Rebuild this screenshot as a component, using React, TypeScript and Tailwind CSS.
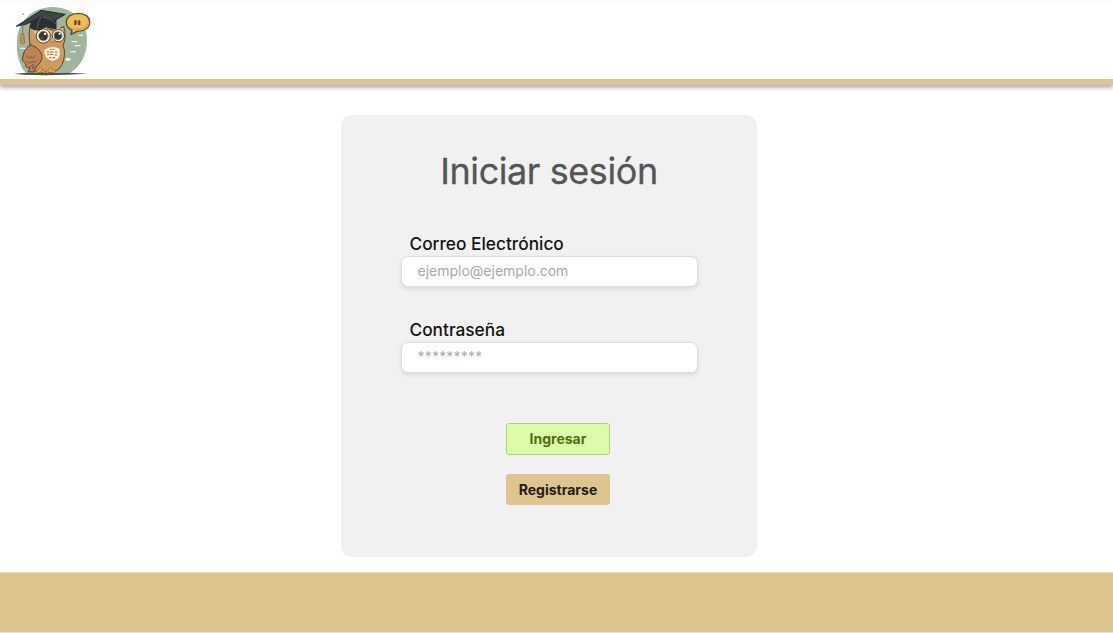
function OwlLogo() {
  return (
    <svg viewBox="30 15 255 216" className="block h-[72px] w-[85px]" role="img" aria-label="Búho" strokeLinejoin="round" strokeLinecap="round">
      <path d="M78 219C57 198 48 160 51 122C54 63 99 21 157 21C219 21 261 66 261 119C261 162 243 198 211 218Z" fill="#a0b59e" />
      <circle cx="69" cy="42" r="3" fill="#a4b6a4" />
      <path d="M42 221Q90 216 145 219L205 218L264 221Q160 228 70 224Z" fill="#40564c" />
      <g stroke="#edf3e9" strokeWidth="4">
        <path d="M216 125h14M226 137h14M213 155h13M62 145h14M237 106h10" />
      </g>
      <rect x="197" y="174" width="14" height="8" rx="1" fill="#f2f5ed" />
      <path d="M90 77Q84 105 90 132L83 192Q89 214 119 216H158Q184 210 191 180Q197 154 189 137Q201 111 191 79L166 92L137 84Z" fill="#cf9a60" stroke="#5a4432" strokeWidth="3" />
      <path d="M92 82Q108 98 126 89L155 109L178 91L189 83L188 106L158 127L137 93L105 103Z" fill="#e6be85" />
      <path d="M133 150Q154 134 178 146Q186 174 160 184Q130 178 133 150Z" fill="#faf2c9" />
      <path d="M151 148h3M159 148h3M142 156h5M152 156h7M166 156h5M143 164h4M151 163h6M165 165h5M149 173h4M159 173h5" stroke="#767253" strokeWidth="3" />
      <path d="M91 135Q68 149 67 180L76 190L79 201L90 204L84 215L101 216L111 199Q132 178 123 159Q114 140 91 135Z" fill="#bc8551" stroke="#5a4030" strokeWidth="3" />
      <path d="M82 168q3 13 10 2q5 12 12-2M80 183q9 12 17 0q5 9 14-2M87 205l12-12-1 14 11-10" fill="none" stroke="#704c34" strokeWidth="2.5" />
      <path d="M107 93Q130 77 150 95L158 107Q164 84 180 88" fill="none" stroke="#e5bd7b" strokeWidth="6" />
      <circle cx="130" cy="108" r="21.5" fill="#f9efcf" stroke="#52483a" strokeWidth="3" />
      <circle cx="130" cy="108" r="14" fill="#303737" stroke="#788078" strokeWidth="2" />
      <circle cx="135" cy="102" r="3.5" fill="white" />
      <circle cx="126" cy="113" r="2" fill="#8b9490" />
      <circle cx="175" cy="107" r="18.5" fill="#f9efcf" stroke="#52483a" strokeWidth="3" />
      <circle cx="174" cy="107" r="12" fill="#303737" stroke="#788078" strokeWidth="2" />
      <circle cx="179" cy="101" r="3.5" fill="white" />
      <path d="M151 117Q158 110 165 118L158 129Z" fill="#f0b348" stroke="#80603a" strokeWidth="1.5" />
      <path d="M94 61L91 83Q101 92 118 90L137 80L168 87V58L130 47Z" fill="#293034" stroke="#252b2e" strokeWidth="3" />
      <path d="M50 78L123 31L196 43L164 62L122 51L78 73Z" fill="#3d4445" stroke="#293033" strokeWidth="3" />
      <path d="M122 52Q113 65 112 85M130 51Q155 56 167 71" fill="none" stroke="#727a76" strokeWidth="2" />
      <path d="M68 76V104" stroke="#a67932" strokeWidth="3" />
      <path d="M65 101h6l3 28-7 4-5-5Z" fill="#c49344" stroke="#856332" strokeWidth="2" />
      <path d="M121 205L119 214M121 209L112 216M122 210L132 216M151 205L152 214M152 209L142 216M153 210L164 216" stroke="#76522b" strokeWidth="8" />
      <path d="M121 205L119 214M121 209L112 216M122 210L132 216M151 205L152 214M152 209L142 216M153 210L164 216" stroke="#e6a641" strokeWidth="6" />
      <path d="M199 67C199 50 214 40 235 40C256 40 269 51 269 67C269 84 254 94 231 94L213 103L216 91Q199 84 199 67Z" fill="#f3bd4c" stroke="#514a3e" strokeWidth="4" />
      <path d="M206 78Q216 91 239 87Q257 85 263 71" fill="none" stroke="#dfa23e" strokeWidth="4" />
      <path d="M225 62h4l-1 12h-4ZM236 62h4v12h-5Z" fill="#513e27" stroke="#513e27" strokeWidth="2" />
    </svg>
  );
}

type FieldProps = { id: string; label: string; type: string; placeholder: string; spacing: string };

function Field({ id, label, type, placeholder, spacing }: FieldProps) {
  return (
    <div className="flex w-[297px] flex-col">
      <label htmlFor={id} className="pl-[9px] text-[17.3px] leading-[25px] font-medium text-[#151515]">{label}</label>
      <input
        id={id}
        type={type}
        placeholder={placeholder}
        className={`h-[31px] w-full rounded-[7px] border border-[#dddddd] bg-white px-4 pb-0.5 text-[14px] text-[#333333] shadow-[0_2px_4px_rgba(0,0,0,0.1)] outline-none placeholder:text-[#aaaaaa] ${spacing}`}
      />
    </div>
  );
}

export default function App() {
  return (
    <div className="flex h-[633px] w-full flex-col overflow-hidden bg-white font-['Inter',sans-serif]">
      <header className="h-[85px] shrink-0 border-t-[5px] border-b-[6px] border-t-[#fbfcff] border-b-[#dec58f] bg-white pl-2.5 shadow-[0_3px_4px_rgba(0,0,0,0.3)]">
        <OwlLogo />
      </header>
      <main className="flex grow justify-center pt-[30px] pr-[15px]">
        <form className="flex h-[442px] w-[416px] flex-col items-center rounded-[11px] bg-[#f1f1f1] pt-9" onSubmit={(e) => e.preventDefault()}>
          <h1 className="text-[36px] leading-10 tracking-[-0.42px] whitespace-nowrap text-[#555555] [-webkit-text-stroke:0.3px_#555555]">Iniciar sesión</h1>
          <div className="mt-10 flex flex-col gap-[30px]">
            <Field id="correo" label="Correo Electrónico" type="email" placeholder="ejemplo@ejemplo.com" spacing="tracking-normal" />
            <Field id="clave" label="Contraseña" type="password" placeholder="*********" spacing="tracking-[0.2px]" />
          </div>
          <div className="mt-[50px] flex flex-col gap-[19px] pl-[18px] text-[14px] font-bold">
            <button type="submit" className="h-8 w-26 rounded-[3px] border border-[#a8d66d] bg-[#dcfcab] pb-0.5 text-[#48730d]">Ingresar</button>
            <button type="button" className="h-[31px] w-26 rounded-[3px] bg-[#dec58f] pb-px text-[#211d14]">Registrarse</button>
          </div>
        </form>
      </main>
      <footer className="h-[61px] shrink-0 border-y border-t-[#e9d9b5] border-b-[#eddfc2] bg-[#dec58f]" />
    </div>
  );
}
